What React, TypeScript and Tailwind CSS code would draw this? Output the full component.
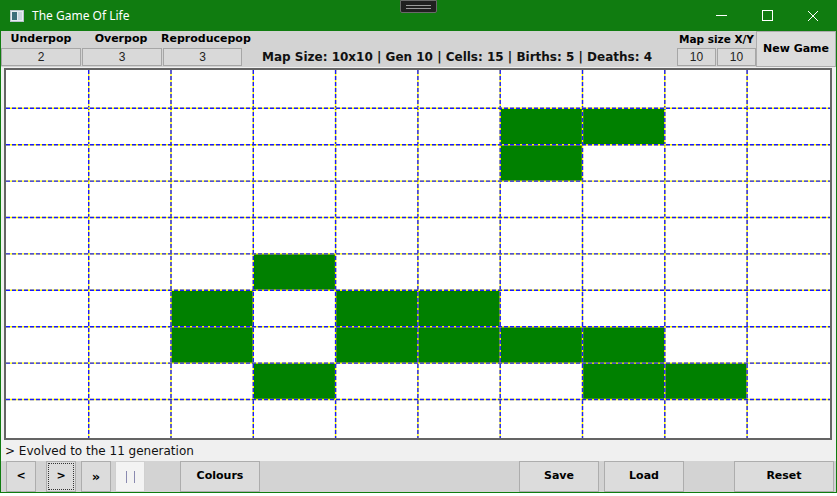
import React from 'react';

const COLS = 10;
const ROWS = 10;
const INNER_W = 824;
const INNER_H = 368;

// grid line positions inside the board (measured)
const xLines = Array.from({ length: COLS - 1 }, (_, i) => 82.7 + 82.3 * i);
const yLines = Array.from({ length: ROWS - 1 }, (_, i) => 38.3 + 36.4 * i);
const xEdges = [0, ...xLines, INNER_W];
const yEdges = [0, ...yLines, INNER_H];

const alive: [number, number][] = [
  [6, 1], [7, 1],
  [6, 2],
  [3, 5],
  [2, 6], [4, 6], [5, 6],
  [2, 7], [4, 7], [5, 7], [6, 7], [7, 7],
  [3, 8], [7, 8], [8, 8],
];

const Board: React.FC = () => (
  <svg width={INNER_W} height={INNER_H} className="block">
    {alive.map(([c, r]) => (
      <rect
        key={`${c}-${r}`}
        x={xEdges[c]}
        y={yEdges[r]}
        width={xEdges[c + 1] - xEdges[c]}
        height={yEdges[r + 1] - yEdges[r]}
        fill="#008000"
      />
    ))}
    {xLines.map((x) => (
      <g key={`v${x}`}>
        <line x1={x} y1={0} x2={x} y2={INNER_H} stroke="#ffff00" strokeWidth={1.4} />
        <line x1={x} y1={0} x2={x} y2={INNER_H} stroke="#1a1aff" strokeWidth={1.4} strokeDasharray="4 2" />
      </g>
    ))}
    {yLines.map((y) => (
      <g key={`h${y}`}>
        <line x1={0} y1={y} x2={INNER_W} y2={y} stroke="#ffff00" strokeWidth={1.4} />
        <line x1={0} y1={y} x2={INNER_W} y2={y} stroke="#1a1aff" strokeWidth={1.4} strokeDasharray="4 2" />
      </g>
    ))}
  </svg>
);

const AppIcon = () => (
  <svg width="14" height="12" viewBox="0 0 14 12">
    <rect x="0.5" y="0.5" width="13" height="11" fill="#e8eef2" stroke="#b8c4cc" />
    <rect x="2" y="2" width="5" height="8" fill="#3d6f7a" />
    <rect x="8" y="2" width="4" height="8" fill="#c9d7de" />
  </svg>
);

const ValueBox: React.FC<{ value: string; w: string }> = ({ value, w }) => (
  <div className={`${w} h-[18px] border border-[#a6a6a6] bg-[#d9d9d9] flex items-center justify-center text-[12px] text-[#222] font-['Liberation_Sans',sans-serif]`}>
    {value}
  </div>
);

const Btn: React.FC<{ label: string; className?: string }> = ({ label, className = '' }) => (
  <div className={`h-[31px] border border-[#adadad] bg-[#dcdcdc] flex items-center justify-center font-bold text-[11px] text-black ${className}`}>
    {label}
  </div>
);

const App: React.FC = () => {
  return (
    <div className="w-[837px] h-[496px] bg-white font-['Comic_Sans_MS','DejaVu_Sans',sans-serif] overflow-hidden">
      <div className="w-[837px] h-[493px] flex flex-col bg-[#107c10] border-x border-b border-[#107c10]">
        {/* title bar */}
        <div className="h-[31px] flex items-center relative text-white">
          <div className="ml-[9px] mr-[8px] flex items-center">
            <AppIcon />
          </div>
          <span className="text-[12px] font-['Noto_Sans',sans-serif]">The Game Of Life</span>
          <div className="absolute left-[399px] top-0 w-[37px] h-[13px] bg-[#202020] border border-[#6a6a6a] rounded-b-[2px] flex flex-col items-center justify-center gap-[2px]">
            <div className="w-[25px] h-px bg-[#9a9a9a]" />
            <div className="w-[25px] h-px bg-[#9a9a9a]" />
          </div>
          <div className="ml-auto flex h-full">
            <div className="w-[46px] flex items-center justify-center">
              <div className="w-[11px] h-px bg-white" />
            </div>
            <div className="w-[46px] flex items-center justify-center">
              <div className="w-[11px] h-[11px] border border-white" />
            </div>
            <div className="w-[46px] flex items-center justify-center">
              <svg width="12" height="12" viewBox="0 0 12 12">
                <path d="M1 1 L11 11 M11 1 L1 11" stroke="white" strokeWidth="1" />
              </svg>
            </div>
          </div>
        </div>

        <div className="flex-1 flex flex-col bg-[#f0f0f0]">
          {/* top panel */}
          <div className="h-[36px] bg-[#d3d3d3] flex items-stretch">
            <div className="flex flex-col">
              <div className="flex h-[17px] items-center">
                <div className="w-[80px] text-center font-bold text-[11px]">Underpop</div>
                <div className="w-[80px] text-center font-bold text-[11px]">Overpop</div>
                <div className="w-[80px] text-center font-bold text-[11px]">Reproducepop</div>
              </div>
              <div className="flex gap-px">
                <ValueBox value="2" w="w-[80px]" />
                <ValueBox value="3" w="w-[80px]" />
                <ValueBox value="3" w="w-[79px]" />
              </div>
            </div>
            <div className="w-[20px]" />
            <div className="mt-[17px] h-[18px] flex items-center font-bold text-[12px] text-[#111] whitespace-nowrap">
              Map Size: 10x10 | Gen 10 | Cells: 15 | Births: 5 | Deaths: 4
            </div>
            <div className="ml-auto flex flex-col">
              <div className="h-[17px] flex items-center justify-center font-bold text-[10.5px]">Map size X/Y</div>
              <div className="flex gap-px">
                <ValueBox value="10" w="w-[39px]" />
                <ValueBox value="10" w="w-[39px]" />
              </div>
            </div>
            <div className="w-[80px] border border-[#adadad] bg-[#dcdcdc] flex items-center justify-center font-bold text-[11px]">
              New Game
            </div>
          </div>

          {/* board */}
          <div className="ml-[3px] mt-px w-[828px] border-2 border-[#646464] bg-white">
            <Board />
          </div>

          {/* status */}
          <div className="h-[21px] flex items-center pl-[4px] text-[12px] text-[#111]">
            &gt; Evolved to the 11 generation
          </div>

          {/* bottom bar */}
          <div className="h-[31px] bg-[#d3d3d3] flex items-stretch">
            <Btn label="<" className="ml-[5px] w-[30px]" />
            <div className="ml-[10px] w-[30px] h-[31px] border border-[#adadad] bg-[#dcdcdc] p-[1px]">
              <div className="w-full h-full border border-dotted border-[#333] flex items-center justify-center font-bold text-[11px]">&gt;</div>
            </div>
            <Btn label="»" className="ml-[5px] w-[30px] text-[13px]" />
            <div className="ml-[4px] w-[30px] h-[31px] border border-[#d0d0d0] bg-[#f3f3f3] flex items-center justify-center gap-[7px]">
              <div className="w-px h-[12px] bg-[#8a8ab0]" />
              <div className="w-px h-[12px] bg-[#8a8ab0]" />
            </div>
            <Btn label="Colours" className="ml-[35px] w-[80px]" />
            <Btn label="Save" className="ml-[259px] w-[80px]" />
            <Btn label="Load" className="ml-[5px] w-[80px]" />
            <Btn label="Reset" className="ml-[50px] w-[100px]" />
          </div>
        </div>
      </div>
    </div>
  );
};

export default App;
